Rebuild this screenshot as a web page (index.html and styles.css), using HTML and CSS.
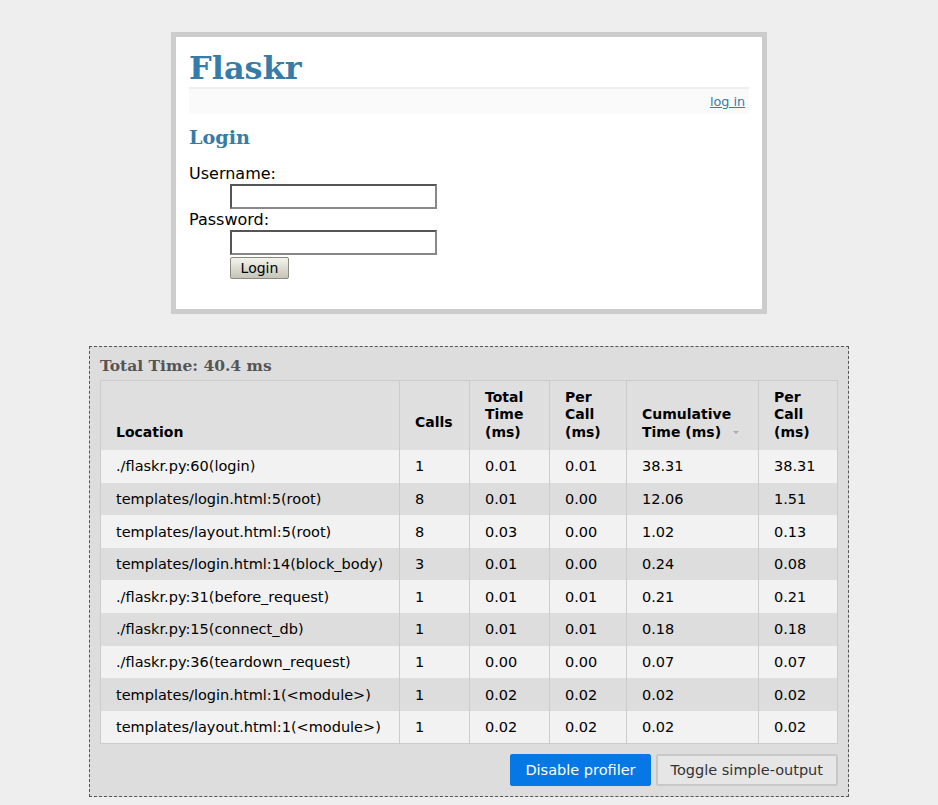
FILE: index.html
```
<!DOCTYPE html>
<html>
<head>
<meta charset="utf-8">
<title>Flaskr</title>
<link rel="stylesheet" href="styles.css">
</head>
<body>
<div class="page">
  <h1>Flaskr</h1>
  <div class="metanav"><a href="#">log in</a></div>
  <h2>Login</h2>
  <form class="login-form">
    <dl>
      <dt>Username:</dt>
      <dd><input class="field" type="text" name="username"></dd>
      <dt>Password:</dt>
      <dd><input class="field" type="password" name="password"></dd>
      <dd><button class="submit" type="button">Login</button></dd>
    </dl>
  </form>
</div>

<div class="profiler">
  <div class="total">Total Time: 40.4 ms</div>
  <table class="stats">
    <thead>
      <tr>
        <th class="c-loc">Location</th>
        <th class="c-calls mid">Calls</th>
        <th class="c-tt">Total<br>Time<br>(ms)</th>
        <th class="c-pc">Per<br>Call<br>(ms)</th>
        <th class="c-cum">Cumulative<br>Time (ms)<span class="arrow"></span></th>
        <th class="c-pc2">Per<br>Call<br>(ms)</th>
      </tr>
    </thead>
    <tbody>
      <tr><td>./flaskr.py:60(login)</td><td>1</td><td>0.01</td><td>0.01</td><td>38.31</td><td>38.31</td></tr>
      <tr><td>templates/login.html:5(root)</td><td>8</td><td>0.01</td><td>0.00</td><td>12.06</td><td>1.51</td></tr>
      <tr><td>templates/layout.html:5(root)</td><td>8</td><td>0.03</td><td>0.00</td><td>1.02</td><td>0.13</td></tr>
      <tr><td>templates/login.html:14(block_body)</td><td>3</td><td>0.01</td><td>0.00</td><td>0.24</td><td>0.08</td></tr>
      <tr><td>./flaskr.py:31(before_request)</td><td>1</td><td>0.01</td><td>0.01</td><td>0.21</td><td>0.21</td></tr>
      <tr><td>./flaskr.py:15(connect_db)</td><td>1</td><td>0.01</td><td>0.01</td><td>0.18</td><td>0.18</td></tr>
      <tr><td>./flaskr.py:36(teardown_request)</td><td>1</td><td>0.00</td><td>0.00</td><td>0.07</td><td>0.07</td></tr>
      <tr><td>templates/login.html:1(&lt;module&gt;)</td><td>1</td><td>0.02</td><td>0.02</td><td>0.02</td><td>0.02</td></tr>
      <tr><td>templates/layout.html:1(&lt;module&gt;)</td><td>1</td><td>0.02</td><td>0.02</td><td>0.02</td><td>0.02</td></tr>
    </tbody>
  </table>
  <div class="actions">
    <button class="btn btn-primary" type="button">Disable profiler</button>
    <button class="btn btn-default" type="button">Toggle simple-output</button>
  </div>
</div>
</body>
</html>
```
FILE: styles.css
```
html, body {
  margin: 0;
  padding: 0;
}
body {
  font-family: "DejaVu Sans", sans-serif;
  font-size: 16px;
  background: #eee;
  color: #000;
  padding: 1px 0 8px;
}
a, h1, h2 {
  color: #377ba8;
}
h1, h2 {
  font-family: "DejaVu Serif", Georgia, serif;
  font-weight: bold;
  margin: 0;
}
h1 {
  font-size: 32px;
  line-height: 37px;
  border-bottom: 2px solid #eee;
}
h2 {
  font-size: 19.2px;
  line-height: 22px;
}
.page {
  margin: 31px auto 32px;
  width: 560px;
  border: 5px solid #ccc;
  padding: 12.8px;
  background: #fff;
}
.metanav {
  text-align: right;
  font-size: 12.8px;
  line-height: 15px;
  padding: 5px 3.84px 5px;
  margin-bottom: 13px;
  background: #fafafa;
}
.login-form dl {
  margin: 14px 0 17px;
  line-height: 21px;
}
.login-form dt {
  margin: 0;
}
.login-form dd {
  margin: 0 0 0 41px;
}
.field {
  display: block;
  box-sizing: border-box;
  width: 207px;
  height: 25px;
  margin: 0;
  padding: 1px 3px;
  border: 2px solid;
  border-color: #555 #888 #888 #555;
  background: #fff;
  font: 13px "DejaVu Sans", sans-serif;
}
.submit {
  display: block;
  box-sizing: border-box;
  width: 59px;
  height: 22px;
  margin: 2px 0 0;
  padding: 0;
  border: 1px solid #8a8a80;
  border-radius: 2px;
  background: linear-gradient(#f4f4ee, #c4c4b8);
  font: 14px/18px "DejaVu Sans", sans-serif;
  color: #000;
}

.profiler {
  width: 738px;
  margin: 0 auto;
  padding: 10px;
  border: 1px dashed #555;
  background: #ddd;
  font-family: "DejaVu Sans", sans-serif;
}
.total {
  font-family: "DejaVu Serif", Georgia, serif;
  font-weight: bold;
  font-size: 15.5px;
  line-height: 18px;
  color: #555;
  margin: 0 0 5px;
}
.stats {
  width: 738px;
  border-collapse: collapse;
  font-size: 14.5px;
  border: 1px solid #ccc;
}
.stats th, .stats td {
  border: 1px solid #ccc;
  border-top: none;
  border-bottom: none;
  text-align: left;
  padding: 0 15px;
}
.stats th {
  font-weight: bold;
  font-size: 14px;
  background: #dfdfdf;
  vertical-align: bottom;
  line-height: 17.5px;
  padding-top: 8px;
  padding-bottom: 9px;
}
.stats th.mid {
  padding-bottom: 19px;
}
.stats td {
  height: 32.6px;
  padding-top: 0;
  padding-bottom: 0;
  white-space: nowrap;
}
.stats tbody tr:nth-child(odd) td {
  background: #f2f2f2;
}
.stats tbody tr:nth-child(even) td {
  background: #ddd;
}
.c-loc { width: 268px; }
.c-calls { width: 39px; }
.c-tt { width: 49px; }
.c-pc { width: 46px; }
.c-cum { width: 101px; }
.c-pc2 { width: 48px; }
.arrow {
  display: inline-block;
  width: 0;
  height: 0;
  margin-left: 12px;
  vertical-align: 3px;
  border-left: 3px solid transparent;
  border-right: 3px solid transparent;
  border-top: 3px solid #aaa;
}
.actions {
  display: flex;
  justify-content: flex-end;
  gap: 5px;
  margin-top: 10px;
}
.btn {
  box-sizing: border-box;
  height: 32px;
  font: 14.5px "DejaVu Sans", sans-serif;
  border-radius: 2px;
  cursor: pointer;
}
.btn-primary {
  background: #0678e6;
  color: #fff;
  border: 1px solid #0678e6;
  padding: 0 14px;
}
.btn-default {
  background: #e6e6e6;
  color: #333;
  border: 2px solid #c8c8c8;
  padding: 0 13px;
}
```
